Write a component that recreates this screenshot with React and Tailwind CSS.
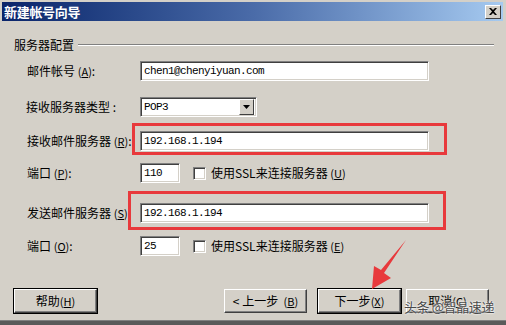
import React from "react";

const cjk = { fontFamily: '"Noto Sans CJK SC", "Noto Sans", sans-serif' };
const mono = { fontFamily: '"Liberation Mono", "Noto Sans CJK SC", monospace' };

// sunken white field, win2000 style
const sunken =
  "bg-white border border-t-[#808080] border-l-[#808080] border-b-white border-r-white shadow-[inset_1px_1px_0_#404040,inset_-1px_-1px_0_#d4d0c8]";

function Key({ k }) {
  return (
    <span className="text-[11px]">
      (<span className="underline underline-offset-1">{k}</span>)
    </span>
  );
}

function Label({ text, k }) {
  return (
    <div className="w-[113px] shrink-0 text-[12px] text-black whitespace-nowrap" style={cjk}>
      {text} {k && <Key k={k} />}:
    </div>
  );
}

function TextField({ value, w = "w-[289px]" }) {
  return (
    <div className={`${sunken} ${w} h-[20px] flex items-center pl-[3px]`}>
      <span className="text-[11px] tracking-[-0.6px] text-black" style={mono}>
        {value}
      </span>
    </div>
  );
}

function Checkbox({ label, k }) {
  return (
    <div className="flex items-center ml-[13px]">
      <div className={`${sunken} w-[13px] h-[13px]`} />
      <span className="ml-[5px] text-[12px] text-black whitespace-nowrap" style={cjk}>
        {label} <Key k={k} />
      </span>
    </div>
  );
}

function Button({ children, primary, className = "" }) {
  return (
    <div
      className={`h-[24px] w-[83px] flex items-center justify-center bg-[#d4d0c8] text-[12px] text-black ${
        primary ? "outline outline-1 outline-black" : ""
      } border border-t-white border-l-white border-b-[#404040] border-r-[#404040] shadow-[inset_-1px_-1px_0_#808080] ${className}`}
      style={cjk}
    >
      {children}
    </div>
  );
}

export default function App() {
  return (
    <div className="w-[506px] h-[325px] bg-[#d4d0c8] relative overflow-hidden flex flex-col">
      {/* title bar */}
      <div className="mt-[2px] ml-[2px] mr-[3px] h-[19px] flex items-center bg-linear-to-r from-[#0a246a] via-[#4a6ba8] to-[#a6caf0]">
        <span className="ml-[2px] text-[13px] font-bold text-white tracking-[-0.3px]" style={cjk}>
          新建帐号向导
        </span>
        <div className="ml-auto mr-[2px] w-[16px] h-[14px] bg-[#d4d0c8] border border-t-white border-l-white border-b-[#404040] border-r-[#404040] flex items-center justify-center">
          <svg width="8" height="7" viewBox="0 0 8 7">
            <path d="M0 0 L2 0 L4 2 L6 0 L8 0 L5 3.5 L8 7 L6 7 L4 5 L2 7 L0 7 L3 3.5 Z" fill="#000" />
          </svg>
        </div>
      </div>

      {/* group header */}
      <div className="mt-[16px] h-[16px] flex items-center pl-[14px] pr-[12px]">
        <span className="text-[12px] text-black" style={cjk}>
          服务器配置
        </span>
        <div className="flex-1 ml-[4px] border-t border-t-[#808080] border-b border-b-white" />
      </div>

      {/* account */}
      <div className="mt-[8px] h-[20px] flex items-center pl-[27px]">
        <Label text="邮件帐号" k="A" />
        <TextField value="chen1@chenyiyuan.com" />
      </div>

      {/* server type */}
      <div className="mt-[16px] h-[20px] flex items-center pl-[26px]">
        <div className="w-[114px] shrink-0 text-[12px] text-black" style={cjk}>
          接收服务器类型 :
        </div>
        <div className={`${sunken} w-[117px] h-[20px] flex items-center pl-[3px] pr-[2px]`}>
          <span className="text-[11px] tracking-[-0.6px] text-black" style={mono}>
            POP3
          </span>
          <div className="ml-auto w-[15px] h-[16px] bg-[#d4d0c8] border border-t-white border-l-white border-b-[#404040] border-r-[#404040] flex items-center justify-center">
            <svg width="7" height="4" viewBox="0 0 7 4">
              <path d="M0 0 H7 L3.5 4 Z" fill="#000" />
            </svg>
          </div>
        </div>
      </div>

      {/* incoming server */}
      <div className="mt-[14px] h-[20px] flex items-center pl-[27px]">
        <Label text="接收邮件服务器" k="R" />
        <div className="relative">
          <TextField value="192.168.1.194" />
          <div className="absolute left-[-8px] right-[-18px] top-[-8px] bottom-[-4px] border-[3px] border-[#e8393c] pointer-events-none" />
        </div>
      </div>

      {/* incoming port */}
      <div className="mt-[12px] h-[20px] flex items-center pl-[27px]">
        <Label text="端口" k="P" />
        <TextField value="110" w="w-[40px]" />
        <Checkbox label="使用SSL来连接服务器" k="U" />
      </div>

      {/* outgoing server */}
      <div className="mt-[20px] h-[20px] flex items-center pl-[27px]">
        <Label text="发送邮件服务器" k="S" />
        <div className="relative">
          <TextField value="192.168.1.194" />
          <div className="absolute left-[-12px] right-[-17px] top-[-12px] bottom-[-7px] border-[3px] border-[#e8393c] pointer-events-none" />
        </div>
      </div>

      {/* outgoing port */}
      <div className="mt-[13px] h-[20px] flex items-center pl-[27px]">
        <Label text="端口" k="O" />
        <TextField value="25" w="w-[40px]" />
        <Checkbox label="使用SSL来连接服务器" k="E" />
      </div>

      {/* buttons */}
      <div className="mt-[33px] flex items-center pl-[14px]">
        <Button primary>
          帮助 <Key k="H" />
        </Button>
        <Button className="ml-[127px]">
          &lt; 上一步&nbsp;&nbsp;<Key k="B" />
        </Button>
        <Button primary className="ml-[11px]">
          下一步 <Key k="X" />
        </Button>
        <Button className="ml-[5px]">
          取消 <Key k="C" />
        </Button>
      </div>

      <div className="mt-auto h-[5px] bg-[#5a5a5a] border-t border-t-[#808080]" />

      {/* annotations */}
      <svg className="absolute left-0 top-0 pointer-events-none" width="506" height="325" viewBox="0 0 506 325">
        <polygon points="406,240 384,273 391,278 372,289 374,266 381,270" fill="#e8393c" />
      </svg>
      <div
        className="absolute left-[404px] top-[298px] text-[13px] leading-[18px] tracking-[-0.4px] text-[#4a4a4a] whitespace-nowrap [text-shadow:0_0_2px_#fff,0_0_2px_#fff]"
        style={cjk}
      >
        头条 @智晶速递
      </div>
    </div>
  );
}
